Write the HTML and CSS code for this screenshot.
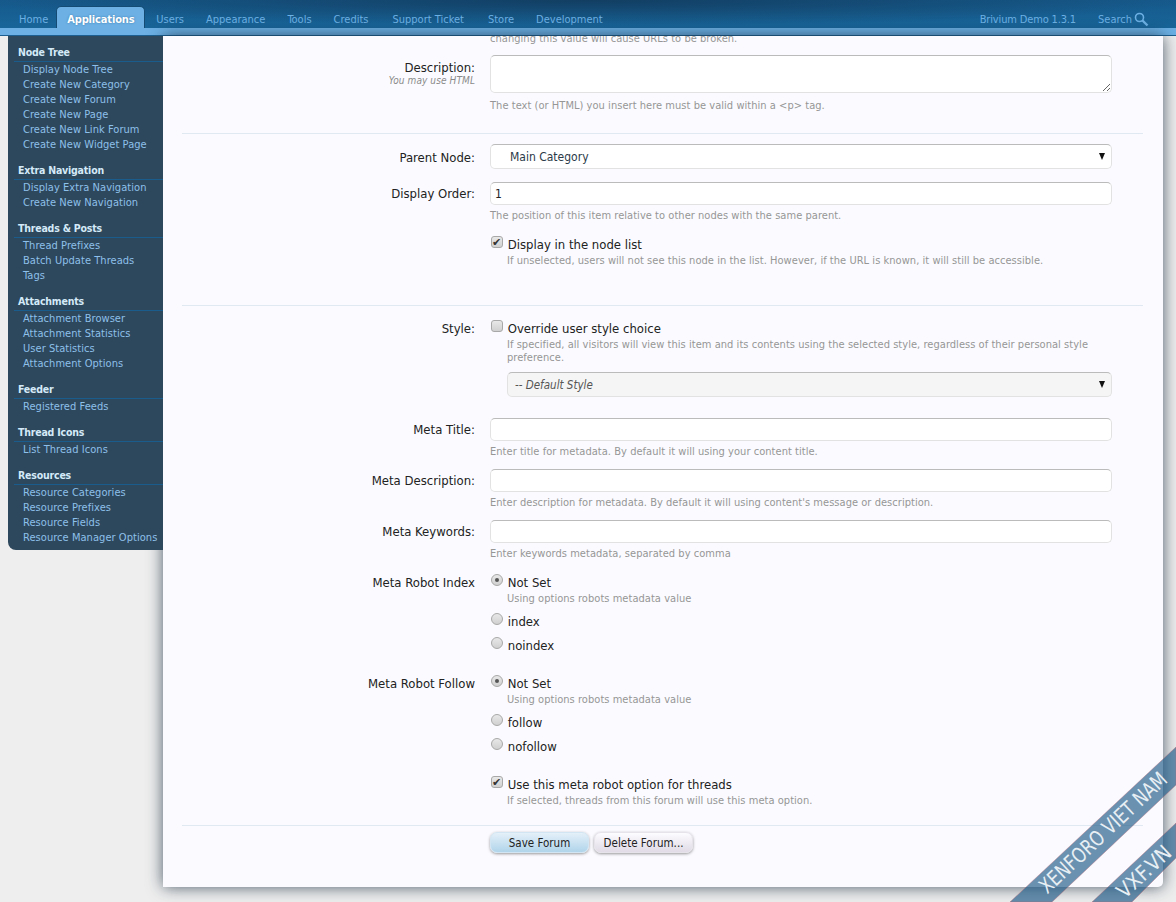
FILE: index.html
```html
<!DOCTYPE html>
<html>
    <head>
        <title>Edit Forum</title>
        <link rel="stylesheet" href="styles.css">
    </head>

    <body>
        <div class="header">
            <div class="tabs">
                <a class="tab homeTab">Home</a>
                <a class="tab active">Applications</a>
                <a class="tab">Users</a>
                <a class="tab">Appearance</a>
                <a class="tab">Tools</a>
                <a class="tab">Credits</a>
                <a class="tab spaced">Support Ticket</a>
                <a class="tab spaced">Store</a>
                <a class="tab">Development</a>
                <div class="tabsRight">
                    <a class="tab demoTab">Brivium Demo 1.3.1</a>
                    <a class="tab searchTab">Search
                        <svg width="15" height="15" viewBox="0 0 15 15"><circle cx="5.5" cy="5.5" r="4" fill="none" stroke="#6cb0e4" stroke-width="1.6"/><path d="M8.5 8.5 L13.5 13.5" stroke="#6cb0e4" stroke-width="2.4"/></svg>
                    </a>
                </div>
            </div>
        </div>
        <div class="strip"></div>

        <div class="main">
            <div class="sidebar">
                <div class="navSection">
                    <h3>Node Tree</h3>
                    <a>Display Node Tree</a>
                    <a>Create New Category</a>
                    <a>Create New Forum</a>
                    <a>Create New Page</a>
                    <a>Create New Link Forum</a>
                    <a>Create New Widget Page</a>
                </div>
                <div class="navSection">
                    <h3>Extra Navigation</h3>
                    <a>Display Extra Navigation</a>
                    <a>Create New Navigation</a>
                </div>
                <div class="navSection">
                    <h3>Threads &amp; Posts</h3>
                    <a>Thread Prefixes</a>
                    <a>Batch Update Threads</a>
                    <a>Tags</a>
                </div>
                <div class="navSection">
                    <h3>Attachments</h3>
                    <a>Attachment Browser</a>
                    <a>Attachment Statistics</a>
                    <a>User Statistics</a>
                    <a>Attachment Options</a>
                </div>
                <div class="navSection">
                    <h3>Feeder</h3>
                    <a>Registered Feeds</a>
                </div>
                <div class="navSection">
                    <h3>Thread Icons</h3>
                    <a>List Thread Icons</a>
                </div>
                <div class="navSection">
                    <h3>Resources</h3>
                    <a>Resource Categories</a>
                    <a>Resource Prefixes</a>
                    <a>Resource Fields</a>
                    <a>Resource Manager Options</a>
                </div>
            </div>

            <div class="content">
                <div class="row clipped">
                    <div></div>
                    <div class="hint">changing this value will cause URLs to be broken.</div>
                </div>

                <div class="row mt10">
                    <label class="rowLabel descLabel">Description:<span class="labelNote">You may use HTML</span></label>
                    <div>
                        <textarea class="field area"></textarea>
                        <div class="hint mt6">The text (or HTML) you insert here must be valid within a &lt;p&gt; tag.</div>
                    </div>
                </div>

                <hr class="divider mt21">

                <div class="row mt10">
                    <label class="rowLabel tallLabel">Parent Node:</label>
                    <div class="selectWrap">
                        <select class="field pick"><option>Main Category</option></select>
                    </div>
                </div>

                <div class="row mt13">
                    <label class="rowLabel">Display Order:</label>
                    <div>
                        <input class="field" type="text" value="1">
                        <div class="hint mt4">The position of this item relative to other nodes with the same parent.</div>
                    </div>
                </div>

                <div class="row mt14">
                    <div></div>
                    <div>
                        <label class="choice"><input type="checkbox" checked> Display in the node list</label>
                        <div class="hint sub">If unselected, users will not see this node in the list. However, if the URL is known, it will still be accessible.</div>
                    </div>
                </div>

                <hr class="divider mt38">

                <div class="row mt14">
                    <label class="rowLabel choiceLabel">Style:</label>
                    <div>
                        <label class="choice"><input type="checkbox"> Override user style choice</label>
                        <div class="hint sub">If specified, all visitors will view this item and its contents using the selected style, regardless of their personal style preference.</div>
                        <div class="selectWrap indent mt8">
                            <select class="field pick disabledPick"><option>-- Default Style</option></select>
                        </div>
                    </div>
                </div>

                <div class="row mt21">
                    <label class="rowLabel">Meta Title:</label>
                    <div>
                        <input class="field" type="text">
                        <div class="hint mt4">Enter title for metadata. By default it will using your content title.</div>
                    </div>
                </div>

                <div class="row mt11">
                    <label class="rowLabel">Meta Description:</label>
                    <div>
                        <input class="field" type="text">
                        <div class="hint mt4">Enter description for metadata. By default it will using content's message or description.</div>
                    </div>
                </div>

                <div class="row mt11">
                    <label class="rowLabel">Meta Keywords:</label>
                    <div>
                        <input class="field" type="text">
                        <div class="hint mt4">Enter keywords metadata, separated by comma</div>
                    </div>
                </div>

                <div class="row mt14">
                    <label class="rowLabel choiceLabel">Meta Robot Index</label>
                    <div>
                        <label class="choice"><input type="radio" name="robotIndex" checked> Not Set</label>
                        <div class="hint sub">Using options robots metadata value</div>
                        <label class="choice"><input type="radio" name="robotIndex"> index</label>
                        <label class="choice mt8"><input type="radio" name="robotIndex"> noindex</label>
                    </div>
                </div>

                <div class="row mt22">
                    <label class="rowLabel choiceLabel">Meta Robot Follow</label>
                    <div>
                        <label class="choice"><input type="radio" name="robotFollow" checked> Not Set</label>
                        <div class="hint sub">Using options robots metadata value</div>
                        <label class="choice"><input type="radio" name="robotFollow"> follow</label>
                        <label class="choice mt8"><input type="radio" name="robotFollow"> nofollow</label>
                    </div>
                </div>

                <div class="row mt22">
                    <div></div>
                    <div>
                        <label class="choice"><input type="checkbox" checked> Use this meta robot option for threads</label>
                        <div class="hint sub">If selected, threads from this forum will use this meta option.</div>
                    </div>
                </div>

                <hr class="divider mt18">

                <div class="row mt6">
                    <div></div>
                    <div class="buttons">
                        <button class="btn primary">Save Forum</button>
                        <button class="btn">Delete Forum...</button>
                    </div>
                </div>
            </div>
        </div>

        <svg class="watermark" width="190" height="170" viewBox="986 732 190 170">
            <polygon points="1010,902 1176,747 1176,785 1052,902"/>
            <polygon points="1092,902 1176,823 1176,858 1132,902"/>
            <text transform="translate(1108,838) rotate(-43)" text-anchor="middle" textLength="166" lengthAdjust="spacingAndGlyphs">XENFORO VIET NAM</text>
            <text transform="translate(1149,877) rotate(-43)" text-anchor="middle" textLength="66" lengthAdjust="spacingAndGlyphs">VXF.VN</text>
        </svg>
    </body>
</html>
```

FILE: styles.css
```css
html, body {
    margin: 0;
    height: 902px;
    overflow: hidden;
}

body {
    position: relative;
    background-color: #eeeeee;
    font-family: "DejaVu Sans Condensed", "DejaVu Sans", sans-serif;
    font-size: 13px;
    color: #222222;
}

/* top bar */
.header {
    height: 28px;
    background: radial-gradient(ellipse 620px 26px at 50% 0, #123e62, rgba(18, 62, 98, 0)), linear-gradient(#165a8c, #186599);
}

.tabs {
    display: flex;
    height: 28px;
    padding-left: 8px;
    padding-right: 16px;
}

.tab {
    padding: 0 11px;
    line-height: 40px;
    height: 28px;
    color: #6cb0e4;
    font-size: 11px;
}

.homeTab {
    padding-right: 8px;
}

.spaced {
    margin-left: 2px;
}

.demoTab {
    letter-spacing: -0.15px;
}

.tab.active {
    box-sizing: border-box;
    margin-top: 6px;
    width: 89px;
    height: 22px;
    line-height: 25px;
    background-color: #6cb0e4;
    border: 1px solid #144b74;
    border-bottom: 0;
    border-radius: 5px 5px 0 0;
    color: #ffffff;
    font-weight: bold;
    letter-spacing: -0.15px;
    padding: 0 0 0 10px;
    text-shadow: 0 0 2px #3a78a8;
}

.tabsRight {
    display: flex;
    margin-left: auto;
}

.searchTab {
    display: flex;
    gap: 2px;
    padding-right: 11px;
}

.searchTab svg {
    margin-top: 12px;
}

.strip {
    height: 7px;
    background-color: #6cb0e4;
    border-bottom: 1px solid #1c5f90;
}

/* page columns */
.main {
    display: flex;
    align-items: flex-start;
    padding-left: 8px;
}

.sidebar {
    position: relative;
    z-index: 1;
    box-sizing: border-box;
    width: 155px;
    padding: 7px 0 5px 6px;
    background-color: #2d475c;
    border-bottom-left-radius: 8px;
}

.navSection {
    margin-bottom: 9px;
}

.navSection:last-child {
    margin-bottom: 0;
}

.navSection h3 {
    margin: 0;
    height: 18px;
    line-height: 18px;
    padding-left: 4px;
    border-bottom: 1px solid #1a5d8c;
    color: #d4eaf8;
    font-size: 10.5px;
    font-weight: bold;
    letter-spacing: -0.2px;
}

.navSection a {
    display: block;
    height: 15px;
    line-height: 15px;
    padding-left: 9px;
    color: #8dc0ea;
    font-size: 11px;
    letter-spacing: 0.05px;
    white-space: nowrap;
}

.content {
    box-sizing: border-box;
    width: 1000px;
    height: 851px;
    padding: 0 20px 33px 19px;
    background-color: #fbfbff;
    border-radius: 0 0 5px 0;
    box-shadow: 0 0 16px rgba(20, 40, 60, 0.75);
}

/* form rows */
.row {
    display: grid;
    grid-template-columns: 293px 622px;
    column-gap: 15px;
}

.clipped {
    height: 9px;
    overflow: hidden;
}

.clipped .hint {
    margin-top: -4px;
}

.rowLabel {
    display: block;
    padding-top: 4px;
    line-height: 16px;
    text-align: right;
}

.descLabel {
    padding-top: 5px;
}

.tallLabel {
    padding-top: 6px;
}

.choiceLabel {
    padding-top: 1px;
}

.labelNote {
    display: block;
    line-height: 10px;
    font-size: 10px;
    font-style: italic;
    letter-spacing: 0.1px;
    color: #8a8a8a;
}

.hint {
    line-height: 13px;
    font-size: 11px;
    letter-spacing: 0.04px;
    color: #969696;
}

.sub {
    margin-top: 2px;
    margin-left: 17px;
}

.sub + .choice {
    margin-top: 8px;
}

.indent {
    margin-left: 17px;
}

.field {
    display: block;
    box-sizing: border-box;
    width: 100%;
    height: 23px;
    margin: 0;
    padding: 2px 4px;
    background-color: #ffffff;
    border: 1px solid #e2e2e2;
    border-top-color: #bbbbbb;
    border-radius: 5px;
    outline: 0;
    font-family: inherit;
    font-size: 12px;
    color: #222222;
}

.area {
    height: 38px;
    resize: vertical;
}

.selectWrap {
    position: relative;
}

.selectWrap::after {
    content: "";
    position: absolute;
    top: 9px;
    right: 7px;
    border-top: 7px solid #111111;
    border-left: 3px solid transparent;
    border-right: 3px solid transparent;
}

.pick {
    height: 25px;
    padding-left: 19px;
    appearance: none;
    color: #2b3a48;
}

.disabledPick {
    padding-left: 7px;
    background-color: #f5f5f5;
    font-size: 11.5px;
    font-style: italic;
    color: #555555;
}

.choice {
    display: block;
    height: 16px;
    line-height: 18px;
}

.choice input {
    position: relative;
    top: -4px;
    appearance: none;
    box-sizing: border-box;
    width: 12px;
    height: 12px;
    margin: 0 1px 0 1px;
    vertical-align: middle;
    background: linear-gradient(#e8e8e8, #d0d0d0);
    border: 1px solid #a8a8a8;
    border-radius: 3px;
}

.choice input[type=radio] {
    border-radius: 50%;
}

.choice input[type=checkbox]:checked::after {
    content: "\2714";
    display: block;
    line-height: 10px;
    font-size: 11px;
    color: #333333;
}

.choice input[type=radio]:checked::after {
    content: "";
    display: block;
    width: 4px;
    height: 4px;
    margin: 3px;
    background-color: #555555;
    border-radius: 50%;
}

.divider {
    height: 0;
    margin-bottom: 0;
    margin-left: 0;
    margin-right: 0;
    border: 0;
    border-top: 1px solid #e0e9f1;
}

.buttons {
    display: flex;
    gap: 5px;
}

.btn {
    width: 99px;
    height: 21px;
    padding: 0;
    background: linear-gradient(#fdfcff, #e0dbe6);
    border: 1px solid #e6e3ea;
    border-radius: 7px;
    box-shadow: 0 1px 3px rgba(0, 0, 0, 0.4);
    font-family: inherit;
    font-size: 11.5px;
    color: #222222;
}

.btn.primary {
    background: linear-gradient(#e4f0f9, #b0d4ea);
    border-color: #d2e5f2;
}

.mt4 { margin-top: 4px; }
.mt6 { margin-top: 6px; }
.mt8 { margin-top: 8px; }
.mt10 { margin-top: 10px; }
.mt11 { margin-top: 11px; }
.mt13 { margin-top: 13px; }
.mt14 { margin-top: 14px; }
.mt18 { margin-top: 18px; }
.mt21 { margin-top: 21px; }
.mt22 { margin-top: 22px; }
.mt38 { margin-top: 38px; }

/* corner ribbons lie over everything */
.watermark {
    position: absolute;
    right: 0;
    bottom: 0;
}

.watermark polygon {
    fill: rgba(30, 90, 135, 0.66);
    stroke: rgba(190, 90, 100, 0.55);
    stroke-width: 0.6;
}

.watermark text {
    font-family: "DejaVu Sans Condensed", sans-serif;
    font-size: 21px;
    fill: #e8eff4;
}
```
